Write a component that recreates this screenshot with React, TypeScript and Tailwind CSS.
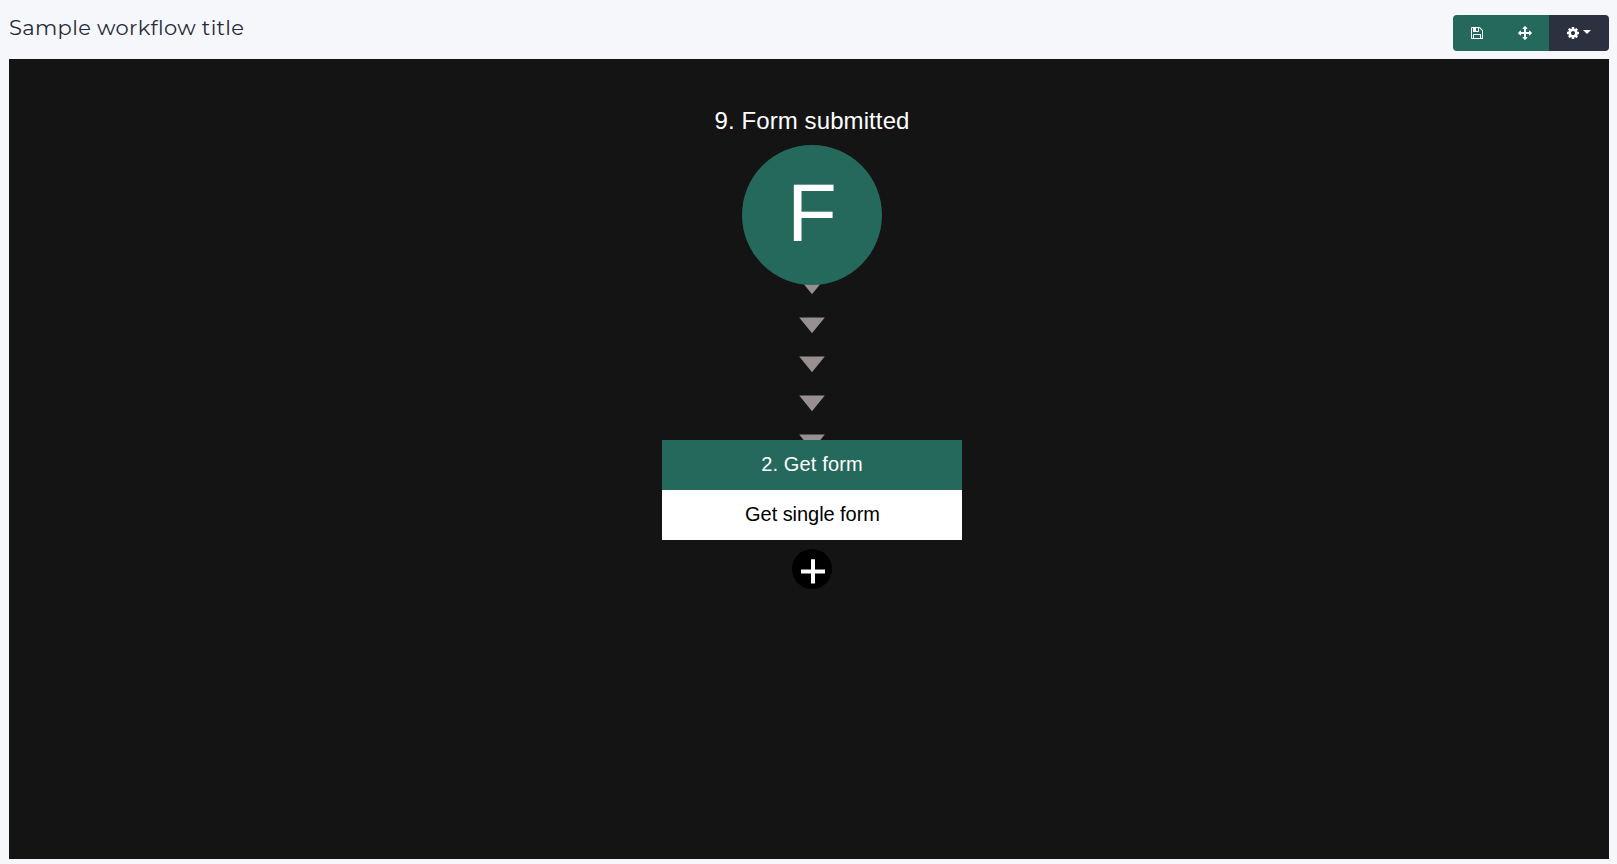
import React from "react";

const SAVE =
  "M512 1536h768v-384h-768v384zm896 0h128v-896q0-14-10-38.5t-20-34.5l-281-281q-10-10-34-20t-39-10v416q0 40-28 68t-68 28h-576q-40 0-68-28t-28-68v-416h-128v1280h128v-416q0-40 28-68t68-28h832q40 0 68 28t28 68v416zm-384-928v-320q0-13-9.5-22.5t-22.5-9.5h-192q-13 0-22.5 9.5t-9.5 22.5v320q0 13 9.5 22.5t22.5 9.5h192q13 0 22.5-9.5t9.5-22.5zm640 32v928q0 40-28 68t-68 28h-1344q-40 0-68-28t-28-68v-1344q0-40 28-68t68-28h928q40 0 88 20t76 48l280 280q28 28 48 76t20 88z";
const MOVE =
  "M1792 896q0 26-19 45l-256 256q-19 19-45 19t-45-19-19-45v-128h-384v384h128q26 0 45 19t19 45-19 45l-256 256q-19 19-45 19t-45-19l-256-256q-19-19-19-45t19-45 45-19h128v-384h-384v128q0 26-19 45t-45 19-45-19l-256-256q-19-19-19-45t19-45l256-256q19-19 45-19t45 19 19 45v128h384v-384h-128q-26 0-45-19t-19-45 19-45l256-256q19-19 45-19t45 19l256 256q19 19 19 45t-19 45-45 19h-128v384h384v-128q0-26 19-45t45-19 45 19l256 256q19 19 19 45z";
const COG =
  "M1152 896q0-106-75-181t-181-75-181 75-75 181 75 181 181 75 181-75 75-181zm512-109v222q0 12-8 23t-20 13l-185 28q-19 54-39 91 35 50 107 138 10 12 10 25t-9 23q-27 37-99 108t-94 71q-12 0-26-9l-138-108q-44 23-91 38-16 136-29 186-7 28-36 28h-222q-14 0-24.5-8.5t-11.5-21.5l-28-184q-49-16-90-37l-141 107q-10 9-25 9-14 0-25-11-126-114-165-168-7-10-7-23 0-12 8-23 15-21 51-66.5t54-70.5q-27-50-41-99l-183-27q-13-2-21-12.5t-8-23.5v-222q0-12 8-23t19-13l186-28q14-46 39-92-40-57-107-138-10-12-10-24 0-10 9-23 26-36 98.5-107.5t94.5-71.5q13 0 26 10l138 107q44-23 91-38 16-136 29-186 7-28 36-28h222q14 0 24.5 8.5t11.5 21.5l28 184q49 16 90 37l142-107q9-9 24-9 13 0 25 10 129 119 165 170 7 8 7 22 0 12-8 23-15 21-51 66.5t-54 70.5q26 50 41 98l183 28q13 2 21 12.5t8 23.5z";

function Icon({ d }: { d: string }) {
  return (
    <svg viewBox="0 0 1792 1792" className="size-3.5 shrink-0" fill="currentColor" aria-hidden="true">
      <path d={d} />
    </svg>
  );
}

function Toolbar() {
  return (
    <div className="flex h-9 overflow-hidden rounded text-white">
      <button className="flex w-12 items-center justify-center bg-[#25695c]">
        <Icon d={SAVE} />
      </button>
      <button className="flex w-12 items-center justify-center bg-[#25695c]">
        <Icon d={MOVE} />
      </button>
      <button className="flex w-[60px] items-center bg-[#2c3140] pl-[17px]">
        <Icon d={COG} />
        <svg viewBox="0 0 8 4" className="mb-0.5 ml-[3px] h-1 w-2" fill="currentColor" aria-hidden="true">
          <path d="M0 0H8L4 4Z" />
        </svg>
      </button>
    </div>
  );
}

function Connector() {
  return (
    <svg className="absolute left-[790px] top-[219px] h-[162px] w-[26px]" viewBox="0 0 26 162" fill="#989090">
      {[0, 39, 78, 117, 156].map((y) => (
        <path key={y} transform={`translate(0 ${y + 0.6})`} d="M0.2 0H25.8L13 15.6Z" />
      ))}
    </svg>
  );
}

export default function App() {
  return (
    <div className="flex h-[864px] flex-col bg-[#f6f7fb] px-[9px] pr-2 font-['Liberation_Sans',Arial,sans-serif]">
      <header className="flex h-[59px] shrink-0 items-start justify-between pt-[15px]">
        <h1 className="whitespace-nowrap font-['Montserrat','Inter',sans-serif] text-[21px] font-[450] leading-[26px] tracking-[0.34px] text-[#252a37]">
          Sample workflow title
        </h1>
        <Toolbar />
      </header>
      <main className="relative h-[800px] w-[1600px] shrink-0 overflow-hidden bg-[#141414]">
        <Connector />
        <div className="absolute left-[653px] top-[48px] flex w-[300px] flex-col items-center text-white">
          <span className="text-2xl leading-7 tracking-[0.1px]">9. Form submitted</span>
          <div className="mt-[10px] flex size-[140px] items-center justify-center rounded-full bg-[#25695c] pb-[3px] text-[81px] leading-none">
            F
          </div>
        </div>
        <div className="absolute left-[653px] top-[381px] w-[300px] text-center text-xl">
          <div className="flex h-[50px] items-center justify-center bg-[#25695c] pb-0.5 tracking-[0.15px] text-white">2. Get form</div>
          <div className="flex h-[50px] items-center justify-center bg-white pb-0.5 pl-px tracking-[-0.05px] text-black">Get single form</div>
        </div>
        <button className="absolute left-[783px] top-[490px] size-10 rounded-full bg-black" aria-label="Add step">
          <svg viewBox="0 0 40 40" className="size-10" stroke="#fff" strokeWidth="4">
            <path d="M9 22.5H33M21 10.3V34.6" />
          </svg>
        </button>
      </main>
    </div>
  );
}
